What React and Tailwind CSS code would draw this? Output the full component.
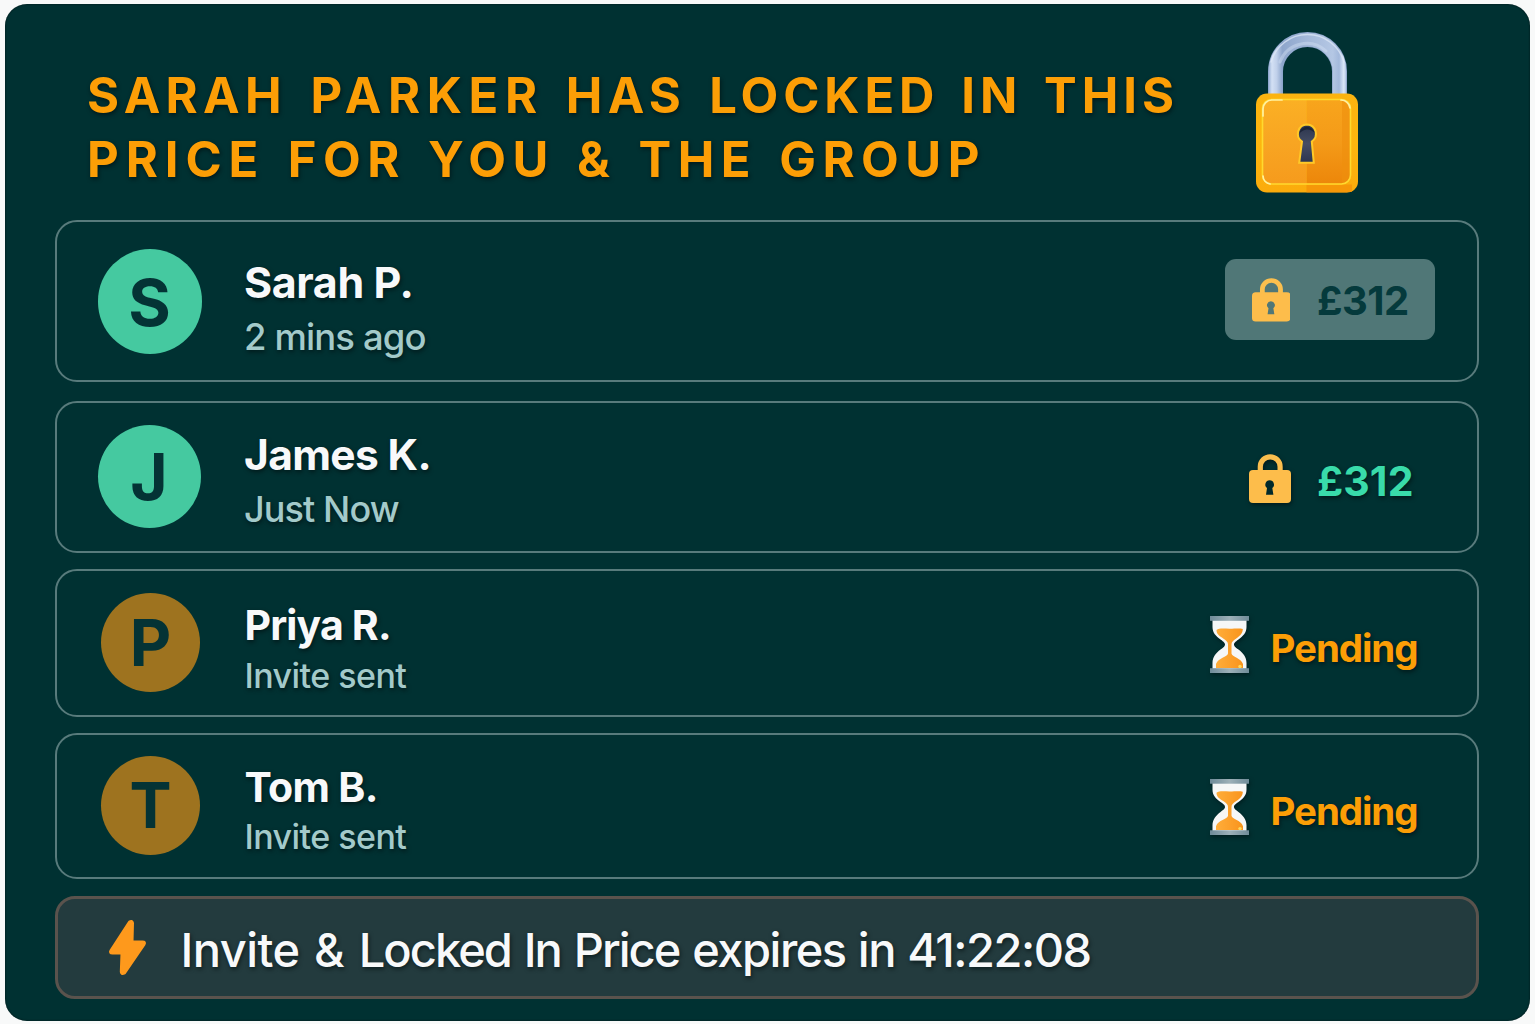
import React from "react";

const SHADOW = "[text-shadow:1px_2px_4px_rgba(0,12,14,0.65)]";

function BigPadlock() {
  return (
    <svg viewBox="0 0 102 161" className="mt-[28px] ml-auto mr-[172px] h-[161px] w-[102px] shrink-0 overflow-visible">
      <defs>
        <linearGradient id="steel" x1="12" y1="0" x2="91" y2="0" gradientUnits="userSpaceOnUse">
          <stop offset="0" stopColor="#8fa9d0" />
          <stop offset="0.05" stopColor="#d3e0f4" />
          <stop offset="0.11" stopColor="#c0d0ea" />
          <stop offset="0.18" stopColor="#8ea6cc" />
          <stop offset="0.5" stopColor="#a4b8d9" />
          <stop offset="0.82" stopColor="#b4c7e4" />
          <stop offset="0.9" stopColor="#a3b9dc" />
          <stop offset="0.96" stopColor="#dbe7f8" />
          <stop offset="1" stopColor="#9db4d8" />
        </linearGradient>
        <linearGradient id="rim" x1="0" y1="61" x2="0" y2="161" gradientUnits="userSpaceOnUse">
          <stop offset="0" stopColor="#fbb310" />
          <stop offset="0.5" stopColor="#fdb60e" />
          <stop offset="1" stopColor="#fbab0c" />
        </linearGradient>
        <linearGradient id="faceL" x1="0" y1="67" x2="0" y2="155" gradientUnits="userSpaceOnUse">
          <stop offset="0" stopColor="#fbb024" />
          <stop offset="0.5" stopColor="#f8a522" />
          <stop offset="1" stopColor="#f69a1c" />
        </linearGradient>
        <linearGradient id="faceR" x1="0" y1="67" x2="0" y2="155" gradientUnits="userSpaceOnUse">
          <stop offset="0" stopColor="#f8a51c" />
          <stop offset="0.5" stopColor="#f49a18" />
          <stop offset="1" stopColor="#ec8509" />
        </linearGradient>
        <linearGradient id="hole" x1="0" y1="0" x2="0" y2="1">
          <stop offset="0" stopColor="#2a344c" />
          <stop offset="0.5" stopColor="#454d64" />
          <stop offset="1" stopColor="#2c3550" />
        </linearGradient>
      </defs>
      <path d="M19.500 64V39.500a32 32 0 0 1 64 0V64" fill="none" stroke="#8da5cb" strokeWidth="15" />
      <path d="M19.500 64V39.500a32 32 0 0 1 64 0V64" fill="none" stroke="url(#steel)" strokeWidth="13.600" />
      <path d="M24 30a28.500 28.500 0 0 1 46-11" fill="none" stroke="#d3e0f4" strokeWidth="3" opacity="0.45" strokeLinecap="round" />
      <path d="M15 30a38 38 0 0 1 73 0" fill="none" stroke="#dfe9f8" strokeWidth="1.400" opacity="0.7" strokeLinecap="round" />
      <rect x="0" y="61.500" width="102" height="99" rx="11" fill="url(#rim)" />
      <path d="M50.500 152.500H96V160h-4a11 11 0 0 1-1 .5H50.500z" fill="#f38f07" opacity="0.7" />
      <path d="M50.500 68H86a8.500 8.500 0 0 1 8.500 8.500v67A8.500 8.500 0 0 1 86 152H50.500z" fill="url(#faceR)" />
      <path d="M50.500 68H15a8.500 8.500 0 0 0-8.500 8.500v67A8.500 8.500 0 0 0 15 152h35.500z" fill="url(#faceL)" />
      <path d="M86 68a8.500 8.500 0 0 1 8.500 8.500v67A8.500 8.500 0 0 1 86 152z" fill="#ee8f0e" opacity="0.6" />
      <rect x="6.500" y="67.500" width="88" height="84.500" rx="9" fill="none" stroke="#ffd92e" strokeWidth="1.600" />
      <path d="M7 84V77a9 9 0 0 1 9-9h10M85 68a9 9 0 0 1 9 8M7 144a8.500 8.500 0 0 0 7 8" fill="none" stroke="#fff0a0" strokeWidth="1.700" strokeLinecap="round" />
      <path d="M51 92.500a9.300 9.300 0 0 0-5 17l-2.800 21.300h14.600l-2-21.300a9.300 9.300 0 0 0-4.800-17z" fill="url(#hole)" stroke="#ffc928" strokeWidth="2" />
      <path d="M43.200 102a7.800 7.800 0 0 1 15.400-1a9.500 9.500 0 0 0-15.400 1z" fill="#131b2d" opacity="0.7" />
    </svg>
  );
}

function SmallPadlock({ className, hole }) {
  return (
    <svg viewBox="0 0 42 49" preserveAspectRatio="none" className={className}>
      <path d="M11.300 18V12.700a9.900 9.900 0 0 1 19.800 0V18" fill="none" stroke="#fbbf4e" strokeWidth="5.200" />
      <rect x="0" y="16" width="42" height="33" rx="4" fill="#fdbd4b" />
      <path d="M20.600 26.300a4.300 4.300 0 0 0-2.600 7.700l-1 6.800h7.400l-1.100-6.800a4.300 4.300 0 0 0-2.700-7.700z" fill={hole} />
    </svg>
  );
}

function Hourglass({ className }) {
  return (
    <svg viewBox="0 0 39 57" preserveAspectRatio="none" className={className}>
      <defs>
        <linearGradient id="cap" x1="0" y1="0" x2="1" y2="0">
          <stop offset="0" stopColor="#6f8b99" />
          <stop offset="0.5" stopColor="#9db0b8" />
          <stop offset="1" stopColor="#708c99" />
        </linearGradient>
        <linearGradient id="sand" x1="0" y1="0" x2="1" y2="0">
          <stop offset="0" stopColor="#ffad3a" />
          <stop offset="1" stopColor="#f9941c" />
        </linearGradient>
      </defs>
      <path d="M2.500 4h34v7c0 6-3.500 9-8 12.500c-3.500 2.500-4.500 3.500-4.500 5s1 2.500 4.500 5c4.500 3.500 8 7.500 8 13.500V53h-34v-6c0-6 3.500-10 8-13.500c3.500-2.500 4.500-3.500 4.500-5s-1-2.500-4.500-5C6 20 2.500 17 2.500 11z" fill="#f6f7f7" />
      <path d="M6.500 14c2.500-2 7-1.300 13-1.300s10-.7 13.300.3c0 4.500-3 7-6.500 9.500c-3.300 2.300-4.800 3.500-4.800 6v9c.5 3.500 9.500 4.500 11.500 10.500v4H6v-4c2-6 11.500-7 12-10.500v-9c0-2.500-1.500-3.700-4.800-6C9.700 20 6.500 18.500 6.500 14z" fill="url(#sand)" />
      <circle cx="30" cy="50.500" r="1.700" fill="#ffd95a" />
      <rect x="0" y="0" width="39" height="4.800" fill="url(#cap)" />
      <rect x="0" y="52.200" width="39" height="4.800" fill="url(#cap)" />
    </svg>
  );
}

function Row({ box, avatar, letter, initial, textBox, name, nameText, sub, subText, children }) {
  return (
    <section className={`flex w-[1424px] items-start rounded-[22px] border-2 border-[#587b7c] ${box}`}>
      <div className="flex w-[187px] shrink-0">
        <div className={`flex items-center justify-center rounded-full font-bold leading-none text-[#043335] ${avatar}`}>
          <span className={letter}>{initial}</span>
        </div>
      </div>
      <div className={`flex flex-col whitespace-nowrap ${textBox}`}>
        <div className={`font-bold leading-none text-[#f8f9fa] ${SHADOW} ${name}`}>{nameText}</div>
        <div className={`leading-none font-medium text-[#a3caca] ${SHADOW} ${sub}`}>{subText}</div>
      </div>
      {children}
    </section>
  );
}

export default function App() {
  return (
    <div className="h-[1024px] w-[1535px] overflow-hidden bg-[#f8f9f9] pt-[4px] pl-[5px] font-['Inter',sans-serif]">
      <main className="flex h-[1017px] w-[1525px] flex-col rounded-[22px] bg-[#003132] pl-[50px] shadow-[inset_0_0_2px_rgba(0,10,12,0.8)]">
        <header className="flex h-[216px] items-start">
          <h1 className={`mt-[67px] ml-[32px] whitespace-nowrap font-bold leading-none text-[#fc9e06] ${SHADOW}`}>
            <span className="block h-[64px] text-[49px]">
              <span className="tracking-[5.300px] [word-spacing:6.800px]">SARAH </span>
              <span className="tracking-[6.600px] [word-spacing:3.800px]">PARKER </span>
              <span className="tracking-[5.300px] [word-spacing:6.200px]">HAS </span>
              <span className="tracking-[4.900px] [word-spacing:5.400px]">LOCKED IN THIS</span>
            </span>
            <span className="block text-[49px]">
              <span className="tracking-[6.900px] [word-spacing:4px]">PRICE </span>
              <span className="tracking-[6.500px] [word-spacing:4px]">FOR YOU &amp; THE GROUP</span>
            </span>
          </h1>
          <BigPadlock />
        </header>

        <Row
          box="h-[162px]"
          avatar="mt-[27px] ml-[41px] h-[105px] w-[104px] bg-[#45c9a0]"
          letter="mt-[2px] mr-[1px] text-[65px]"
          initial="S"
          textBox="mt-[39px] ml-0"
          name="text-[43px] tracking-[-0.400px]"
          nameText="Sarah P."
          sub="mt-[14.500px] text-[36.500px] tracking-[-0.900px]"
          subText="2 mins ago"
        >
          <div className="mt-[37px] mr-[42px] ml-auto flex h-[81px] w-[210px] items-start rounded-[11px] bg-[#507777]">
            <SmallPadlock className="mt-[19px] ml-[26.500px] h-[43.500px] w-[38.500px]" hole="#507777" />
            <span className="mt-[22px] ml-[27px] text-[40px] leading-none font-bold tracking-[-0.500px] text-[#053a3c]">£312</span>
          </div>
        </Row>

        <Row
          box="mt-[19px] h-[152px]"
          avatar="mt-[22px] ml-[41px] h-[103px] w-[103px] bg-[#45c9a0]"
          letter="mr-[1px] text-[64px]"
          initial="J"
          textBox="mt-[31px] ml-0"
          name="text-[42.500px] tracking-[-0.650px]"
          nameText="James K."
          sub="mt-[14.800px] text-[36px] tracking-[-0.900px]"
          subText="Just Now"
        >
          <div className="mr-[62px] ml-auto flex w-[166px] items-start">
            <SmallPadlock className="mt-[50.700px] h-[49px] w-[42px] drop-shadow-[1px_2px_2px_rgba(0,12,14,0.6)]" hole="#00292b" />
            <span className={`mt-[58px] ml-[26px] text-[41px] leading-none font-bold tracking-[0.100px] text-[#39dbaa] ${SHADOW}`}>£312</span>
          </div>
        </Row>

        <Row
          box="mt-[16px] h-[148px]"
          avatar="mt-[22px] ml-[44px] h-[99px] w-[99px] bg-[#9e731f]"
          letter="mt-[1px] text-[64px]"
          initial="P"
          textBox="mt-[34px] ml-[0.500px]"
          name="text-[41px] tracking-[-0.850px]"
          nameText="Priya R."
          sub="mt-[12.500px] text-[34px] tracking-[-0.550px]"
          subText="Invite sent"
        >
          <div className="mr-[56px] ml-auto flex w-[211px] items-start">
            <Hourglass className="mt-[45px] h-[57px] w-[39px] drop-shadow-[1px_2px_2px_rgba(0,12,14,0.5)]" />
            <span className={`mt-[58px] ml-[21.500px] text-[38.500px] leading-none font-bold tracking-[-1.080px] text-[#fc9e06] ${SHADOW}`}>Pending</span>
          </div>
        </Row>

        <Row
          box="mt-[16px] h-[146px]"
          avatar="mt-[21px] ml-[44px] h-[99px] w-[99px] bg-[#9e731f]"
          letter="text-[63px]"
          initial="T"
          textBox="mt-[32px] ml-[0.500px]"
          name="text-[41px] tracking-[-0.650px]"
          nameText="Tom B."
          sub="mt-[12.200px] text-[34px] tracking-[-0.550px]"
          subText="Invite sent"
        >
          <div className="mr-[56px] ml-auto flex w-[211px] items-start">
            <Hourglass className="mt-[44px] h-[56px] w-[39px] drop-shadow-[1px_2px_2px_rgba(0,12,14,0.5)]" />
            <span className={`mt-[57.400px] ml-[21.500px] text-[38.500px] leading-none font-bold tracking-[-1.080px] text-[#fc9e06] ${SHADOW}`}>Pending</span>
          </div>
        </Row>

        <footer className="mt-[17px] flex h-[103px] w-[1424px] items-start rounded-[20px] border-[3px] border-[#5a534d] bg-[#233b3e]">
          <svg viewBox="0 0 39 58" className="mt-[19.700px] ml-[49.500px] h-[58px] w-[39px]">
            <path d="M21.500 3L3 31.500Q1.500 34 4.500 34H14L13.300 53Q13.500 55.500 16.500 54L36 25.500Q37.500 23 34.500 23H24L24.500 4Q24 1.500 21.500 3Z" fill="#fe991c" stroke="#fe991c" strokeWidth="3" strokeLinejoin="round" />
          </svg>
          <span className={`mt-[26.700px] ml-[34px] whitespace-nowrap text-[47px] leading-none font-medium text-[#f8f9fa] ${SHADOW}`}>
            <span className="tracking-[-0.550px] [word-spacing:2.500px]">Invite &amp; </span>
            <span className="tracking-[-1.950px] [word-spacing:2.200px]">Locked In Price </span>
            <span className="tracking-[-1.500px] [word-spacing:1.200px]">expires in 41:22:08</span>
          </span>
        </footer>
      </main>
    </div>
  );
}
